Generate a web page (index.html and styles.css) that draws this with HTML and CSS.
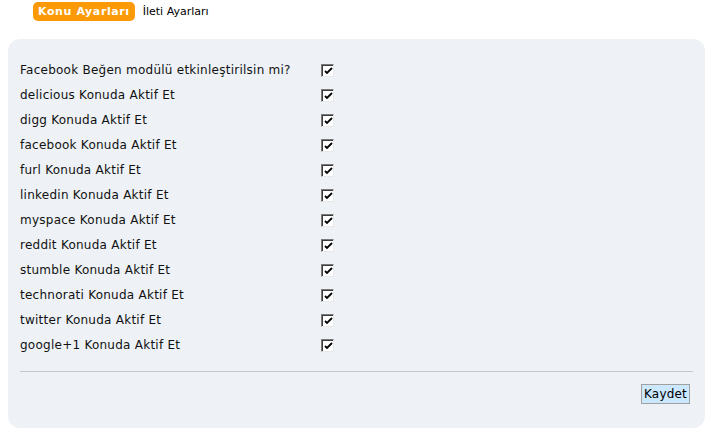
FILE: index.html
```html
<!DOCTYPE html>
<html>
<head>
<meta charset="utf-8">
<link rel="stylesheet" href="styles.css">
</head>
<body>
<div class="tabs">
  <span class="tab active">Konu Ayarları</span>
  <span class="tab">İleti Ayarları</span>
</div>
<div class="panel">
  <div class="rows">
    <div class="row"><span class="label">Facebook Beğen modülü etkinleştirilsin mi?</span><span class="cb"><svg viewBox="0 0 9 9" width="9" height="9"><path d="M1 4 L3 6 L8 1" fill="none" stroke="#000" stroke-width="1.8"/></svg></span></div>
    <div class="row"><span class="label">delicious Konuda Aktif Et</span><span class="cb"><svg viewBox="0 0 9 9" width="9" height="9"><path d="M1 4 L3 6 L8 1" fill="none" stroke="#000" stroke-width="1.8"/></svg></span></div>
    <div class="row"><span class="label">digg Konuda Aktif Et</span><span class="cb"><svg viewBox="0 0 9 9" width="9" height="9"><path d="M1 4 L3 6 L8 1" fill="none" stroke="#000" stroke-width="1.8"/></svg></span></div>
    <div class="row"><span class="label">facebook Konuda Aktif Et</span><span class="cb"><svg viewBox="0 0 9 9" width="9" height="9"><path d="M1 4 L3 6 L8 1" fill="none" stroke="#000" stroke-width="1.8"/></svg></span></div>
    <div class="row"><span class="label">furl Konuda Aktif Et</span><span class="cb"><svg viewBox="0 0 9 9" width="9" height="9"><path d="M1 4 L3 6 L8 1" fill="none" stroke="#000" stroke-width="1.8"/></svg></span></div>
    <div class="row"><span class="label">linkedin Konuda Aktif Et</span><span class="cb"><svg viewBox="0 0 9 9" width="9" height="9"><path d="M1 4 L3 6 L8 1" fill="none" stroke="#000" stroke-width="1.8"/></svg></span></div>
    <div class="row"><span class="label">myspace Konuda Aktif Et</span><span class="cb"><svg viewBox="0 0 9 9" width="9" height="9"><path d="M1 4 L3 6 L8 1" fill="none" stroke="#000" stroke-width="1.8"/></svg></span></div>
    <div class="row"><span class="label">reddit Konuda Aktif Et</span><span class="cb"><svg viewBox="0 0 9 9" width="9" height="9"><path d="M1 4 L3 6 L8 1" fill="none" stroke="#000" stroke-width="1.8"/></svg></span></div>
    <div class="row"><span class="label">stumble Konuda Aktif Et</span><span class="cb"><svg viewBox="0 0 9 9" width="9" height="9"><path d="M1 4 L3 6 L8 1" fill="none" stroke="#000" stroke-width="1.8"/></svg></span></div>
    <div class="row"><span class="label">technorati Konuda Aktif Et</span><span class="cb"><svg viewBox="0 0 9 9" width="9" height="9"><path d="M1 4 L3 6 L8 1" fill="none" stroke="#000" stroke-width="1.8"/></svg></span></div>
    <div class="row"><span class="label">twitter Konuda Aktif Et</span><span class="cb"><svg viewBox="0 0 9 9" width="9" height="9"><path d="M1 4 L3 6 L8 1" fill="none" stroke="#000" stroke-width="1.8"/></svg></span></div>
    <div class="row"><span class="label">google+1 Konuda Aktif Et</span><span class="cb"><svg viewBox="0 0 9 9" width="9" height="9"><path d="M1 4 L3 6 L8 1" fill="none" stroke="#000" stroke-width="1.8"/></svg></span></div>
  </div>
  <div class="divider"></div>
  <div class="actions"><button class="save">Kaydet</button></div>
</div>
</body>
</html>
```
FILE: styles.css
```css
html, body { margin: 0; padding: 0; background: #fff; }
body {
  font-family: "DejaVu Sans", Verdana, sans-serif;
  font-size: 12px;
  color: #000;
  padding: 2px 9px 0 8px;
}
.tabs {
  display: flex;
  align-items: center;
  height: 19px;
  padding-left: 25px;
  gap: 8px;
}
.tab {
  font-size: 11px;
  line-height: 19px;
}
.tab.active {
  background: #fb9a06;
  color: #fff;
  font-weight: bold;
  letter-spacing: 0.6px;
  padding: 0 5px 0 5px;
  border-radius: 5px;
}
.panel {
  margin-top: 18px;
  background: #eef2f6;
  border-radius: 12px;
  padding: 18px 12px 0 12px;
  height: 389px;
  box-sizing: border-box;
}
.rows {
  display: flex;
  flex-direction: column;
}
.row {
  display: grid;
  grid-template-columns: 301px 13px;
  align-items: center;
  height: 25px;
}
.label {
  white-space: nowrap;
  letter-spacing: 0.25px;
  color: #111;
}
.cb {
  width: 13px;
  height: 13px;
  box-sizing: border-box;
  background: #fff;
  border-top: 1px solid #7a7a7a;
  border-left: 1px solid #7a7a7a;
  border-right: 1px solid #e8e8e8;
  border-bottom: 1px solid #e8e8e8;
  box-shadow: inset 1px 1px 0 #3c3c3c;
  display: flex;
  align-items: center;
  justify-content: center;
  margin-top: 2px;
}
.cb svg { display: block; margin: 1px 0 0 1px; }
.divider {
  margin-top: 14px;
  height: 1px;
  background: #c8c8c8;
}
.actions {
  display: flex;
  justify-content: flex-end;
  padding-top: 12px;
  padding-right: 3px;
}
.save {
  font-family: "DejaVu Sans", Verdana, sans-serif;
  font-size: 12px;
  background: #cce8ff;
  border: 1px solid #a0a0a0;
  padding: 1px 2px;
  height: 20px;
  margin: 0;
  color: #000;
  line-height: 16px;
  letter-spacing: 0.2px;
}
```
